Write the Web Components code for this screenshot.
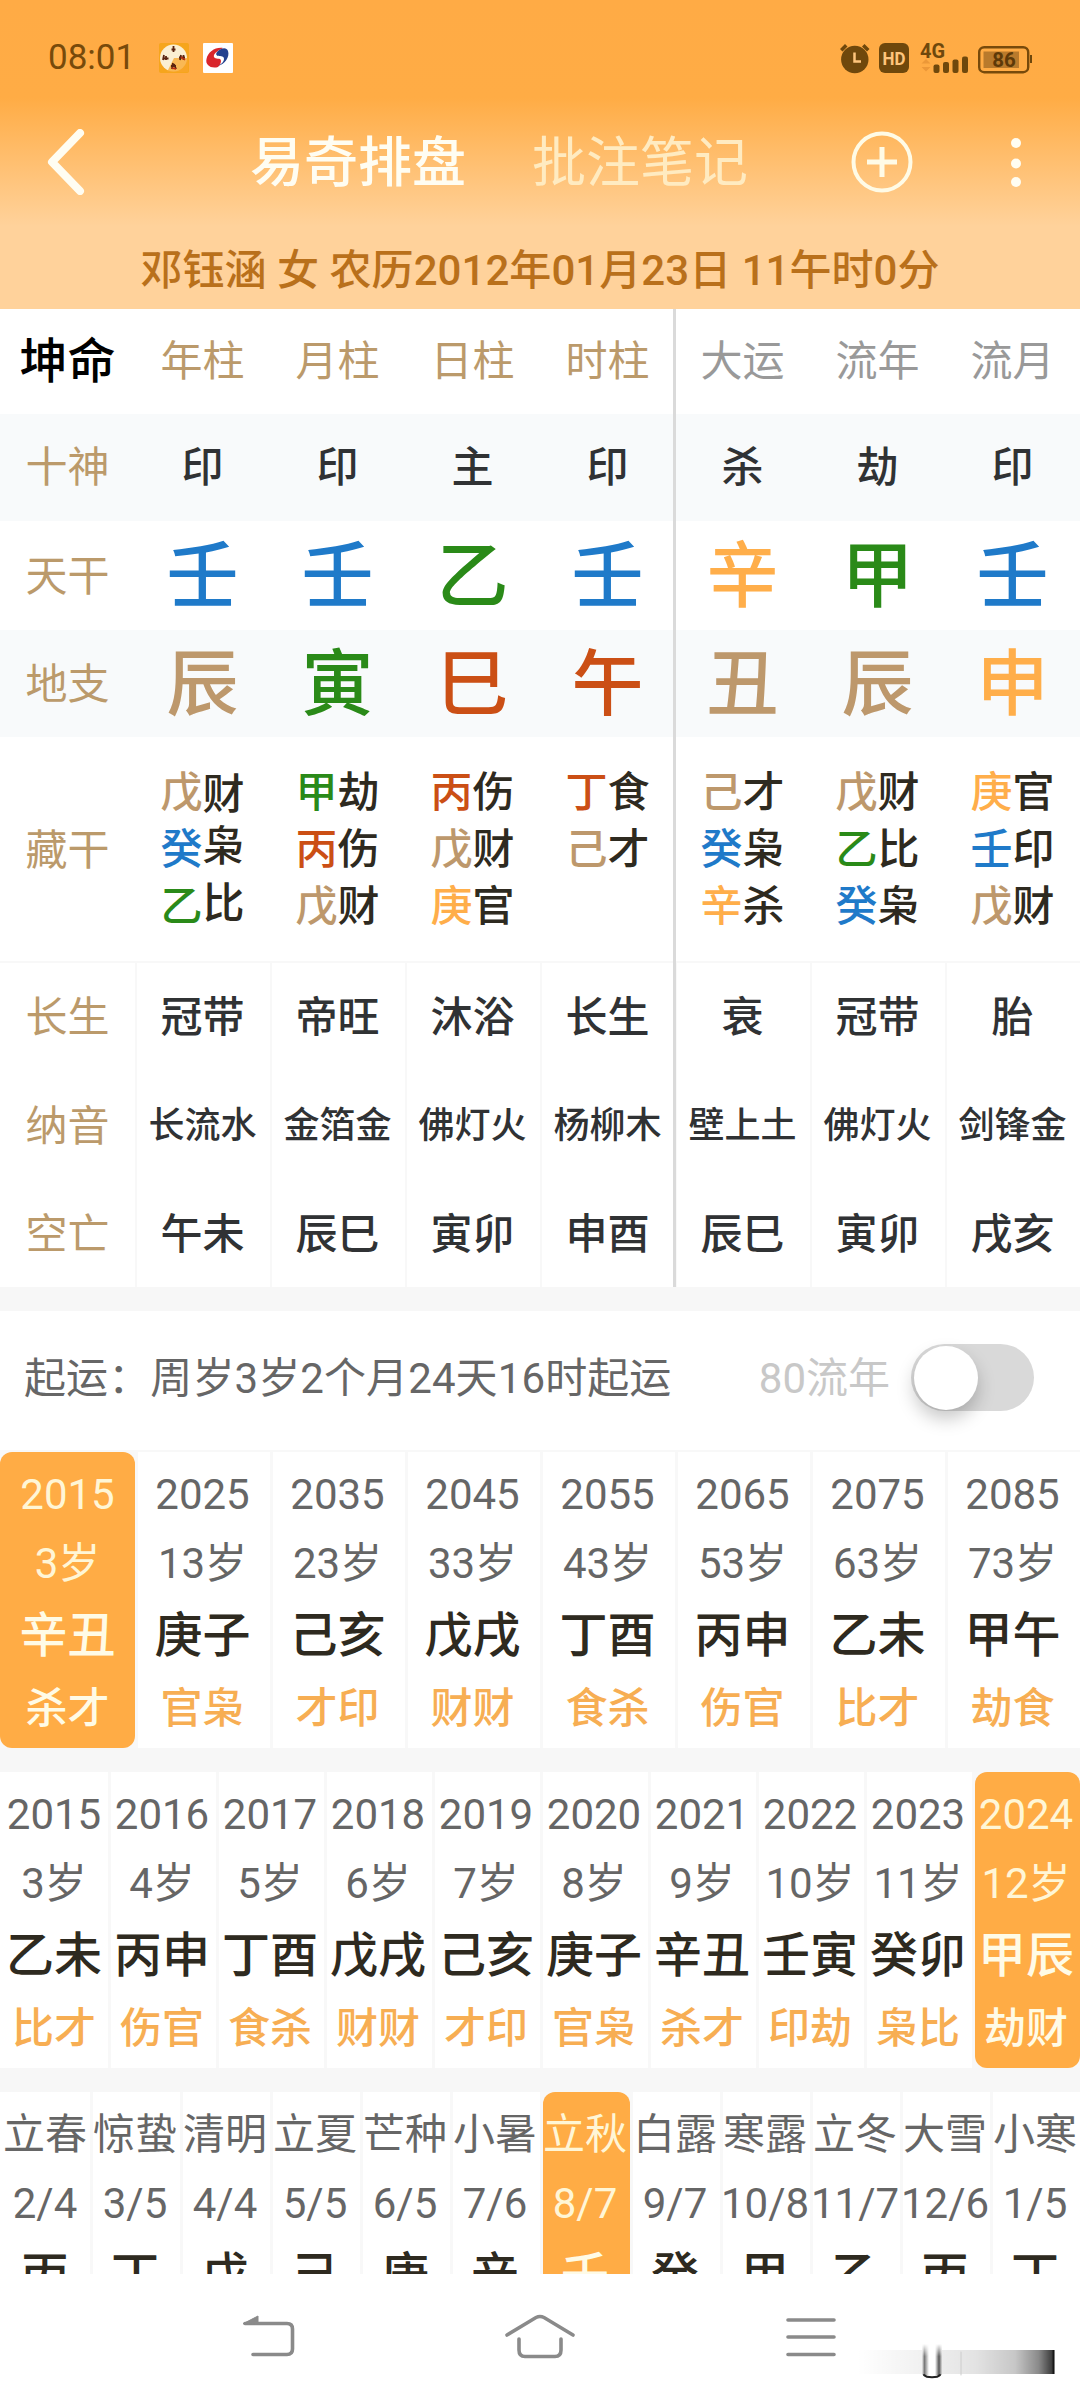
<!DOCTYPE html>
<html lang="zh-CN">
<head>
<meta charset="utf-8">
<title>易奇排盘</title>
<style>
  body {
    margin: 0;
    background: #fff;
    font-family: Roboto, "Noto Sans CJK SC", sans-serif;
    font-size: 42px;
  }
</style>
</head>
<body>
<chart-app></chart-app>

<script>
// five-element colours of the stems and branches
const COLORS = {
  wood: '#2a8a18',
  fire: '#cb4f15',
  earth: '#bd986c',
  metal: '#ffae4a',
  water: '#1f7ac9'
};

const ELEMENTS = {
  甲: 'wood', 乙: 'wood', 寅: 'wood', 卯: 'wood',
  丙: 'fire', 丁: 'fire', 巳: 'fire', 午: 'fire',
  戊: 'earth', 己: 'earth', 辰: 'earth', 戌: 'earth', 丑: 'earth', 未: 'earth',
  庚: 'metal', 辛: 'metal', 申: 'metal', 酉: 'metal',
  壬: 'water', 癸: 'water', 亥: 'water', 子: 'water'
};

const colorOf = char => COLORS[ELEMENTS[char]];

const DECADES = [
  '2015 3岁 辛丑 杀才', '2025 13岁 庚子 官枭', '2035 23岁 己亥 才印',
  '2045 33岁 戊戌 财财', '2055 43岁 丁酉 食杀', '2065 53岁 丙申 伤官',
  '2075 63岁 乙未 比才', '2085 73岁 甲午 劫食'
];

const YEARS = [
  '2015 3岁 乙未 比才', '2016 4岁 丙申 伤官', '2017 5岁 丁酉 食杀',
  '2018 6岁 戊戌 财财', '2019 7岁 己亥 才印', '2020 8岁 庚子 官枭',
  '2021 9岁 辛丑 杀才', '2022 10岁 壬寅 印劫', '2023 11岁 癸卯 枭比',
  '2024 12岁 甲辰 劫财'
];

const MONTHS = [
  '立春 2/4 丙', '惊蛰 3/5 丁', '清明 4/4 戊', '立夏 5/5 己',
  '芒种 6/5 庚', '小暑 7/6 辛', '立秋 8/7 壬', '白露 9/7 癸',
  '寒露 10/8 甲', '立冬 11/7 乙', '大雪 12/6 丙', '小寒 1/5 丁'
];

const define = (name, html, setup) => {
  const template = document.createElement('template');
  template.innerHTML = html;

  window.customElements.define(name, class extends HTMLElement {
    constructor () {
      super();
      this.attachShadow({ mode: 'open' });
      this.shadowRoot.appendChild(template.content.cloneNode(true));
    }

    connectedCallback () {
      if (setup) {
        setup(this, this.shadowRoot);
      }
    }
  });
};

define('status-bar', `
  <style>
    :host {
      display: flex;
      align-items: center;
      height: 116px;
      padding: 0 48px;
      box-sizing: border-box;
      color: #774a0b;
    }
    .time {
      width: 111px;
      font-size: 35px;
      line-height: 116px;
    }
    .apps {
      display: flex;
      gap: 14px;
      flex: 1;
    }
    .icons {
      display: flex;
      align-items: center;
    }
    svg {
      display: block;
      overflow: visible;
    }
  </style>
  <span class="time">08:01</span>
  <span class="apps">
    <svg width="30" height="30" viewBox="0 0 30 30">
      <rect width="30" height="30" rx="2" fill="#f6a51c"/>
      <circle cx="14.500" cy="15" r="13.500" fill="#fbefd2"/>
      <path d="M15 15H29V29H8Z" fill="#f8a62a" opacity=".75"/>
      <path d="M14.500 3v6M12.500 6.500h4M5 12l-1 5M3.500 15.500h6M7 13v4M22 12l-1 5M20 14.500h6M24.500 12v5M14 20l-1 6M12 23h5M15 21l2 5" stroke="#5b2410" stroke-width="1.800" fill="none"/>
      <path d="M22 14l4 3M13 25l4 1" stroke="#c22a10" stroke-width="1.500"/>
    </svg>
    <svg width="30" height="30" viewBox="0 0 30 30">
      <rect width="30" height="30" rx="1" fill="#fff"/>
      <path d="M15 24C8 26 2 22 3.500 16C5 9 12 4 20 5C14 8 10 11 11 14C12 17 18 14 18 18C18 21 16 23 15 24Z" fill="#d9252c"/>
      <path d="M15 23C22 21 27 14 25 8C24 5 21 4.500 18 6C14 8 12 11 14 12.500C16 14 21 12 21 16C21 19 18 21 15 23Z" fill="#24418f"/>
    </svg>
  </span>
  <span class="icons">
    <svg width="194" height="32" viewBox="0 0 194 32">
      <g fill="#6f480c">
        <circle cx="16.800" cy="17.500" r="13.700"/>
        <path d="M2 7L7 2L9.500 4.500L4.500 9.500ZM31.500 7L26.500 2L24 4.500L29 9.500Z"/>
        <rect x="41" y="1" width="30" height="30" rx="6"/>
        <rect x="95.500" y="22.500" width="6" height="8.500" rx="2"/>
        <rect x="105" y="20" width="6" height="11" rx="2"/>
        <rect x="114.500" y="17.500" width="6" height="13.500" rx="2"/>
        <rect x="124" y="14.500" width="6" height="16.500" rx="2"/>
        <path d="M192 13h2v8h-2z"/>
      </g>
      <path d="M16.500 10.500V19.500H23" fill="none" stroke="#ffc57c" stroke-width="2.500"/>
      <text x="56" y="22.500" text-anchor="middle" textLength="23" lengthAdjust="spacingAndGlyphs" font-family="Roboto" font-size="18" font-weight="700" fill="#ffc57c">HD</text>
      <text x="82" y="15.500" font-family="Roboto" font-size="20" font-weight="700" textLength="25" lengthAdjust="spacingAndGlyphs" fill="#6f480c">4G</text>
      <path d="M83.500 21.500L88 17L92.500 21.500ZM83.500 25H92.500L88 29.500Z" fill="#ec9838"/>
      <rect x="141.200" y="5.200" width="49" height="25" rx="5" fill="none" stroke="#774a0b" stroke-width="2.400"/>
      <rect x="145.500" y="9.500" width="35.500" height="16.500" fill="#b97a2c"/>
      <text x="166" y="25" text-anchor="middle" font-family="Roboto" font-size="20.500" font-weight="700" fill="#5e3908">86</text>
    </svg>
  </span>
`);

define('app-header', `
  <style>
    :host {
      display: block;
      height: 309px;
      background: linear-gradient(#ffab45 0, #ffac45 98px, #ffd29b 226px, #ffd29b);
    }
    .bar {
      display: flex;
      align-items: center;
      height: 92px;
      padding: 0 53px 0 47px;
      font-size: 54px;
      line-height: 92px;
      color: #fffdf2;
    }
    .back {
      margin-right: 165px;
    }
    span {
      padding-top: 4px;
    }
    .current {
      font-weight: 500;
      margin-right: 66px;
    }
    .other {
      color: #ffebc1;
      flex: 1;
    }
    .menu {
      margin-left: 92px;
    }
    svg {
      display: block;
    }
    .person {
      padding-top: 34px;
      line-height: 58px;
      font-weight: 500;
      letter-spacing: 0.05px;
      text-align: center;
      color: #b9701b;
    }
  </style>
  <status-bar></status-bar>
  <div class="bar">
    <svg class="back" width="38" height="66" viewBox="0 0 38 66">
      <path d="M33 4L5 33L33 62" fill="none" stroke="#fffdf2" stroke-width="8" stroke-linecap="round" stroke-linejoin="round"/>
    </svg>
    <span class="current">易奇排盘</span>
    <span class="other">批注笔记</span>
    <svg width="62" height="62" viewBox="0 0 62 62" fill="none" stroke="#fffbe6">
      <circle cx="31" cy="31" r="28.500" stroke-width="4"/>
      <path d="M31 16V46M16 31H46" stroke-width="5"/>
    </svg>
    <svg class="menu" width="22" height="62" viewBox="0 0 22 62" fill="#fffdf2">
      <circle cx="11" cy="12" r="5"/>
      <circle cx="11" cy="32.500" r="5"/>
      <circle cx="11" cy="51" r="5"/>
    </svg>
  </div>
  <div class="person">邓钰涵 女 农历2012年01月23日 11午时0分</div>
`);

// one row of the pillar table: label attribute, cells separated by spaces
define('pillar-row', `
  <style>
    :host {
      display: grid;
      grid-template-columns: repeat(8, 1fr);
      align-items: center;
      height: 107px;
      text-align: center;
      line-height: 60px;
      color: #303234;
      font-weight: 500;
      white-space: nowrap;
    }
    :host([shaded]) {
      background: #f8fafb;
    }
    :host([kind="head"]) {
      height: 105px;
      font-weight: 400;
      color: #bb9a6b;
    }
    :host([kind="stem"]) {
      height: 109px;
    }
    :host([kind="head"]) .cell:nth-child(n + 7) {
      color: #999;
    }
    :host([kind="stem"]) .cell,
    :host([kind="branch"]) .cell {
      font-size: 72px;
      line-height: 100px;
      padding-top: 3px;
    }
    :host([kind="stem"]) .label,
    :host([kind="branch"]) .label {
      padding-top: 3px;
    }
    :host([kind="hidden"]) {
      height: 224px;
      color: #2e2a20;
      line-height: 57px;
    }
    :host([kind="hidden"]) .label {
      padding-top: 2px;
    }
    :host([kind="grid"]) {
      height: 108.67px;
      align-items: stretch;
      line-height: 113px;
    }
    :host([kind="grid"]) .cell {
      border-left: 2px solid #f8f8f8;
      padding-right: 2px;
      height: 108.67px;
      box-sizing: border-box;
    }
    :host([small]) .cell {
      font-size: 36px;
    }
    .label {
      font-weight: 400;
      color: #bb9a6b;
    }
    :host([kind="head"]) .label {
      font-size: 48px;
      font-weight: 500;
      color: #000;
    }
    .lines {
      height: 171px;
    }
    .god {
      display: inline-block;
    }
    /* the gods of the year pillar sit slightly off their stems */
    .lines:nth-child(3) div:nth-child(1) .god {
      transform: translateY(2px);
    }
    .lines:nth-child(3) div:nth-child(n + 2) .god {
      transform: translateY(-3px);
    }
  </style>
  <div class="label"></div>
`, (host, root) => {
  const kind = host.getAttribute('kind');

  root.querySelector('.label').textContent = host.getAttribute('label');

  host.getAttribute('cells').split(' ').forEach(text => {
    const cell = document.createElement('div');
    cell.className = 'cell';

    if (kind === 'hidden') {
      cell.classList.add('lines');
      cell.innerHTML = text.split(',')
        .map(pair => `<div><span style="color:${colorOf(pair[0])}">${pair[0]}</span><span class="god">${pair[1]}</span></div>`)
        .join('');
    } else {
      cell.textContent = text;
    }

    if (kind === 'stem' || kind === 'branch') {
      cell.style.color = colorOf(text);
    }

    root.appendChild(cell);
  });
});

define('pillar-table', `
  <style>
    :host {
      display: block;
      position: relative;
      height: 978px;
    }
    .rule {
      height: 2px;
      margin-bottom: -2px;
      background: #f8f8f8;
    }
    /* separates the natal pillars from the current ones */
    .divider {
      position: absolute;
      top: 0;
      bottom: 0;
      left: 673px;
      width: 3px;
      background: #dadada;
    }
  </style>
  <pillar-row kind="head" label="坤命" cells="年柱 月柱 日柱 时柱 大运 流年 流月"></pillar-row>
  <pillar-row shaded label="十神" cells="印 印 主 印 杀 劫 印"></pillar-row>
  <pillar-row kind="stem" label="天干" cells="壬 壬 乙 壬 辛 甲 壬"></pillar-row>
  <pillar-row kind="branch" shaded label="地支" cells="辰 寅 巳 午 丑 辰 申"></pillar-row>
  <pillar-row kind="hidden" label="藏干" cells="戊财,癸枭,乙比 甲劫,丙伤,戊财 丙伤,戊财,庚官 丁食,己才 己才,癸枭,辛杀 戊财,乙比,癸枭 庚官,壬印,戊财"></pillar-row>
  <div class="rule"></div>
  <pillar-row kind="grid" label="长生" cells="冠带 帝旺 沐浴 长生 衰 冠带 胎"></pillar-row>
  <pillar-row kind="grid" small label="纳音" cells="长流水 金箔金 佛灯火 杨柳木 壁上土 佛灯火 剑锋金"></pillar-row>
  <pillar-row kind="grid" label="空亡" cells="午未 辰巳 寅卯 申酉 辰巳 寅卯 戌亥"></pillar-row>
  <div class="divider"></div>
`);

define('toggle-switch', `
  <style>
    :host {
      display: flex;
      align-items: center;
      width: 123px;
      height: 67px;
      padding-left: 3px;
      box-sizing: border-box;
      border-radius: 34px;
      background: #d9d9d9;
    }
    .knob {
      width: 64px;
      height: 64px;
      border-radius: 50%;
      background: #fff;
      box-shadow: 0 9px 18px rgba(0, 0, 0, 0.22);
    }
  </style>
  <div class="knob"></div>
`);

define('luck-start', `
  <style>
    :host {
      display: flex;
      align-items: center;
      height: 141px;
      padding: 0 46px 0 24px;
      box-sizing: border-box;
      border-bottom: 2px solid #f8f8f8;
      line-height: 60px;
      color: #666;
      background: #fff;
    }
    .text {
      flex: 1;
      letter-spacing: 0.1px;
    }
    .hint {
      margin-right: 21px;
      color: #c8c8c8;
    }
    toggle-switch {
      margin-bottom: 6px;
    }
    span {
      margin-bottom: 3px;
    }
  </style>
  <span class="text"><slot></slot></span>
  <span class="hint">80流年</span>
  <toggle-switch></toggle-switch>
`);

define('luck-card', `
  <style>
    :host {
      display: block;
      height: 296px;
      box-sizing: border-box;
      border-left: 3px solid #f8f8f8;
      background: #fff;
    }
    :host(:first-child) {
      border-left: 0;
    }
    :host([active]) {
      background: #f8f8f8;
    }
    .box {
      height: 100%;
      padding: 8px 3px 0 0;
      box-sizing: border-box;
      border-radius: 12px;
      display: flex;
      flex-direction: column;
      align-items: center;
      color: #666;
      white-space: nowrap;
    }
    :host(:first-child) .box {
      padding-right: 0;
    }
    .top,
    .sub {
      line-height: 69px;
    }
    .pair {
      font-size: 48px;
      font-weight: 500;
      line-height: 76px;
      color: #2e2a20;
    }
    .gods {
      font-weight: 500;
      line-height: 70px;
      color: #f7ae53;
    }
    :host([active]) .box {
      background: #ffac45;
      color: #fff6d6;
    }
    :host([active]) .pair,
    :host([active]) .gods {
      color: #fffbe6;
    }
  </style>
  <div class="box">
    <div class="top"></div>
    <div class="sub"></div>
    <div class="pair"></div>
    <div class="gods"></div>
  </div>
`, (host, root) => {
  const parts = host.getAttribute('text').split(' ');

  ['top', 'sub', 'pair', 'gods'].forEach((name, i) => {
    const el = root.querySelector(`.${name}`);
    if (parts[i]) {
      el.textContent = parts[i];
    } else {
      el.remove();
    }
  });
});

define('luck-strip', `
  <style>
    :host {
      display: block;
      overflow: hidden;
    }
    .cards {
      display: grid;
    }
  </style>
  <div class="cards"></div>
`, (host, root) => {
  const lists = { decades: DECADES, years: YEARS, months: MONTHS };
  const list = lists[host.getAttribute('list')];
  const cards = root.querySelector('.cards');

  cards.style.gridTemplateColumns = `repeat(${list.length}, minmax(0, 1fr))`;

  list.forEach((text, i) => {
    const card = document.createElement('luck-card');
    card.setAttribute('text', text);
    if (i === Number(host.getAttribute('active'))) {
      card.setAttribute('active', '');
    }
    cards.appendChild(card);
  });
});

define('nav-bar', `
  <style>
    :host {
      display: flex;
      align-items: center;
      justify-content: space-between;
      position: relative;
      height: 126px;
      padding: 0 242px 0 241px;
      box-sizing: border-box;
      background: #fff;
    }
    svg {
      display: block;
      fill: none;
      stroke: #8a8a8a;
      stroke-width: 3.6;
      stroke-linecap: round;
    }
    .smudge {
      position: absolute;
      left: 855px;
      top: 70px;
      stroke: none;
    }
  </style>
  <svg width="54" height="46" viewBox="0 0 54 46">
    <path d="M4 9.500H46Q51.500 9.500 51.500 15V35Q51.500 40.500 46 40.500H12"/>
    <path d="M2.500 9.500L17 2V9.500Z" fill="#8a8a8a" stroke-width="1"/>
  </svg>
  <svg width="72" height="46" viewBox="0 0 72 46">
    <path d="M3 21L32 3.500Q36 1.500 40 3.500L69 21M15 25V36Q15 42.500 21 42.500H51Q57 42.500 57 36V25"/>
  </svg>
  <svg width="54" height="46" viewBox="0 0 54 46">
    <path d="M4 6H50M4 23H50M4 40.500H50"/>
  </svg>
  <svg class="smudge" width="202" height="40" viewBox="0 0 202 40">
    <defs>
      <linearGradient id="fade">
        <stop offset="0" stop-color="#000" stop-opacity="0"/>
        <stop offset=".35" stop-color="#000" stop-opacity=".06"/>
        <stop offset=".6" stop-color="#000" stop-opacity=".11"/>
        <stop offset=".8" stop-color="#000" stop-opacity=".22"/>
        <stop offset=".92" stop-color="#000" stop-opacity=".46"/>
        <stop offset=".985" stop-color="#000" stop-opacity=".75"/>
        <stop offset="1" stop-color="#000"/>
      </linearGradient>
      <linearGradient id="tube">
        <stop offset="0" stop-color="#eee"/>
        <stop offset=".12" stop-color="#777"/>
        <stop offset=".35" stop-color="#fff"/>
        <stop offset=".65" stop-color="#fff"/>
        <stop offset=".85" stop-color="#555"/>
        <stop offset="1" stop-color="#ddd"/>
      </linearGradient>
      <linearGradient id="veil" x1="0" y1="0" x2="0" y2="1">
        <stop offset="0" stop-color="#fff"/>
        <stop offset=".4" stop-color="#fff" stop-opacity="0"/>
      </linearGradient>
    </defs>
    <rect x="2" y="6" width="197.500" height="24" fill="url(#fade)"/>
    <rect x="67" y="0" width="20" height="31" fill="url(#tube)"/>
    <rect x="67" y="0" width="20" height="31" fill="url(#veil)"/>
    <path d="M106 8V31" style="stroke:#ccc;stroke-width:1"/>
    <path d="M69 31Q71 33.200 77 33.200Q83 33.200 85 31" style="stroke:#222;stroke-width:2"/>
  </svg>
`);

define('chart-app', `
  <style>
    :host {
      display: flex;
      flex-direction: column;
      width: 1080px;
      height: 2400px;
      overflow: hidden;
      background: #f7f7f7;
    }
    :host > * {
      flex: none;
    }
    pillar-table {
      background: #fff;
      margin-bottom: 24px;
    }
    luck-strip {
      margin-bottom: 24px;
    }
    .last {
      height: 182px;
      margin-bottom: 0;
    }
  </style>
  <app-header></app-header>
  <pillar-table></pillar-table>
  <luck-start>起运：周岁3岁2个月24天16时起运</luck-start>
  <luck-strip list="decades" active="0"></luck-strip>
  <luck-strip list="years" active="9"></luck-strip>
  <luck-strip class="last" list="months" active="6"></luck-strip>
  <nav-bar></nav-bar>
`);
</script>
</body>
</html>
